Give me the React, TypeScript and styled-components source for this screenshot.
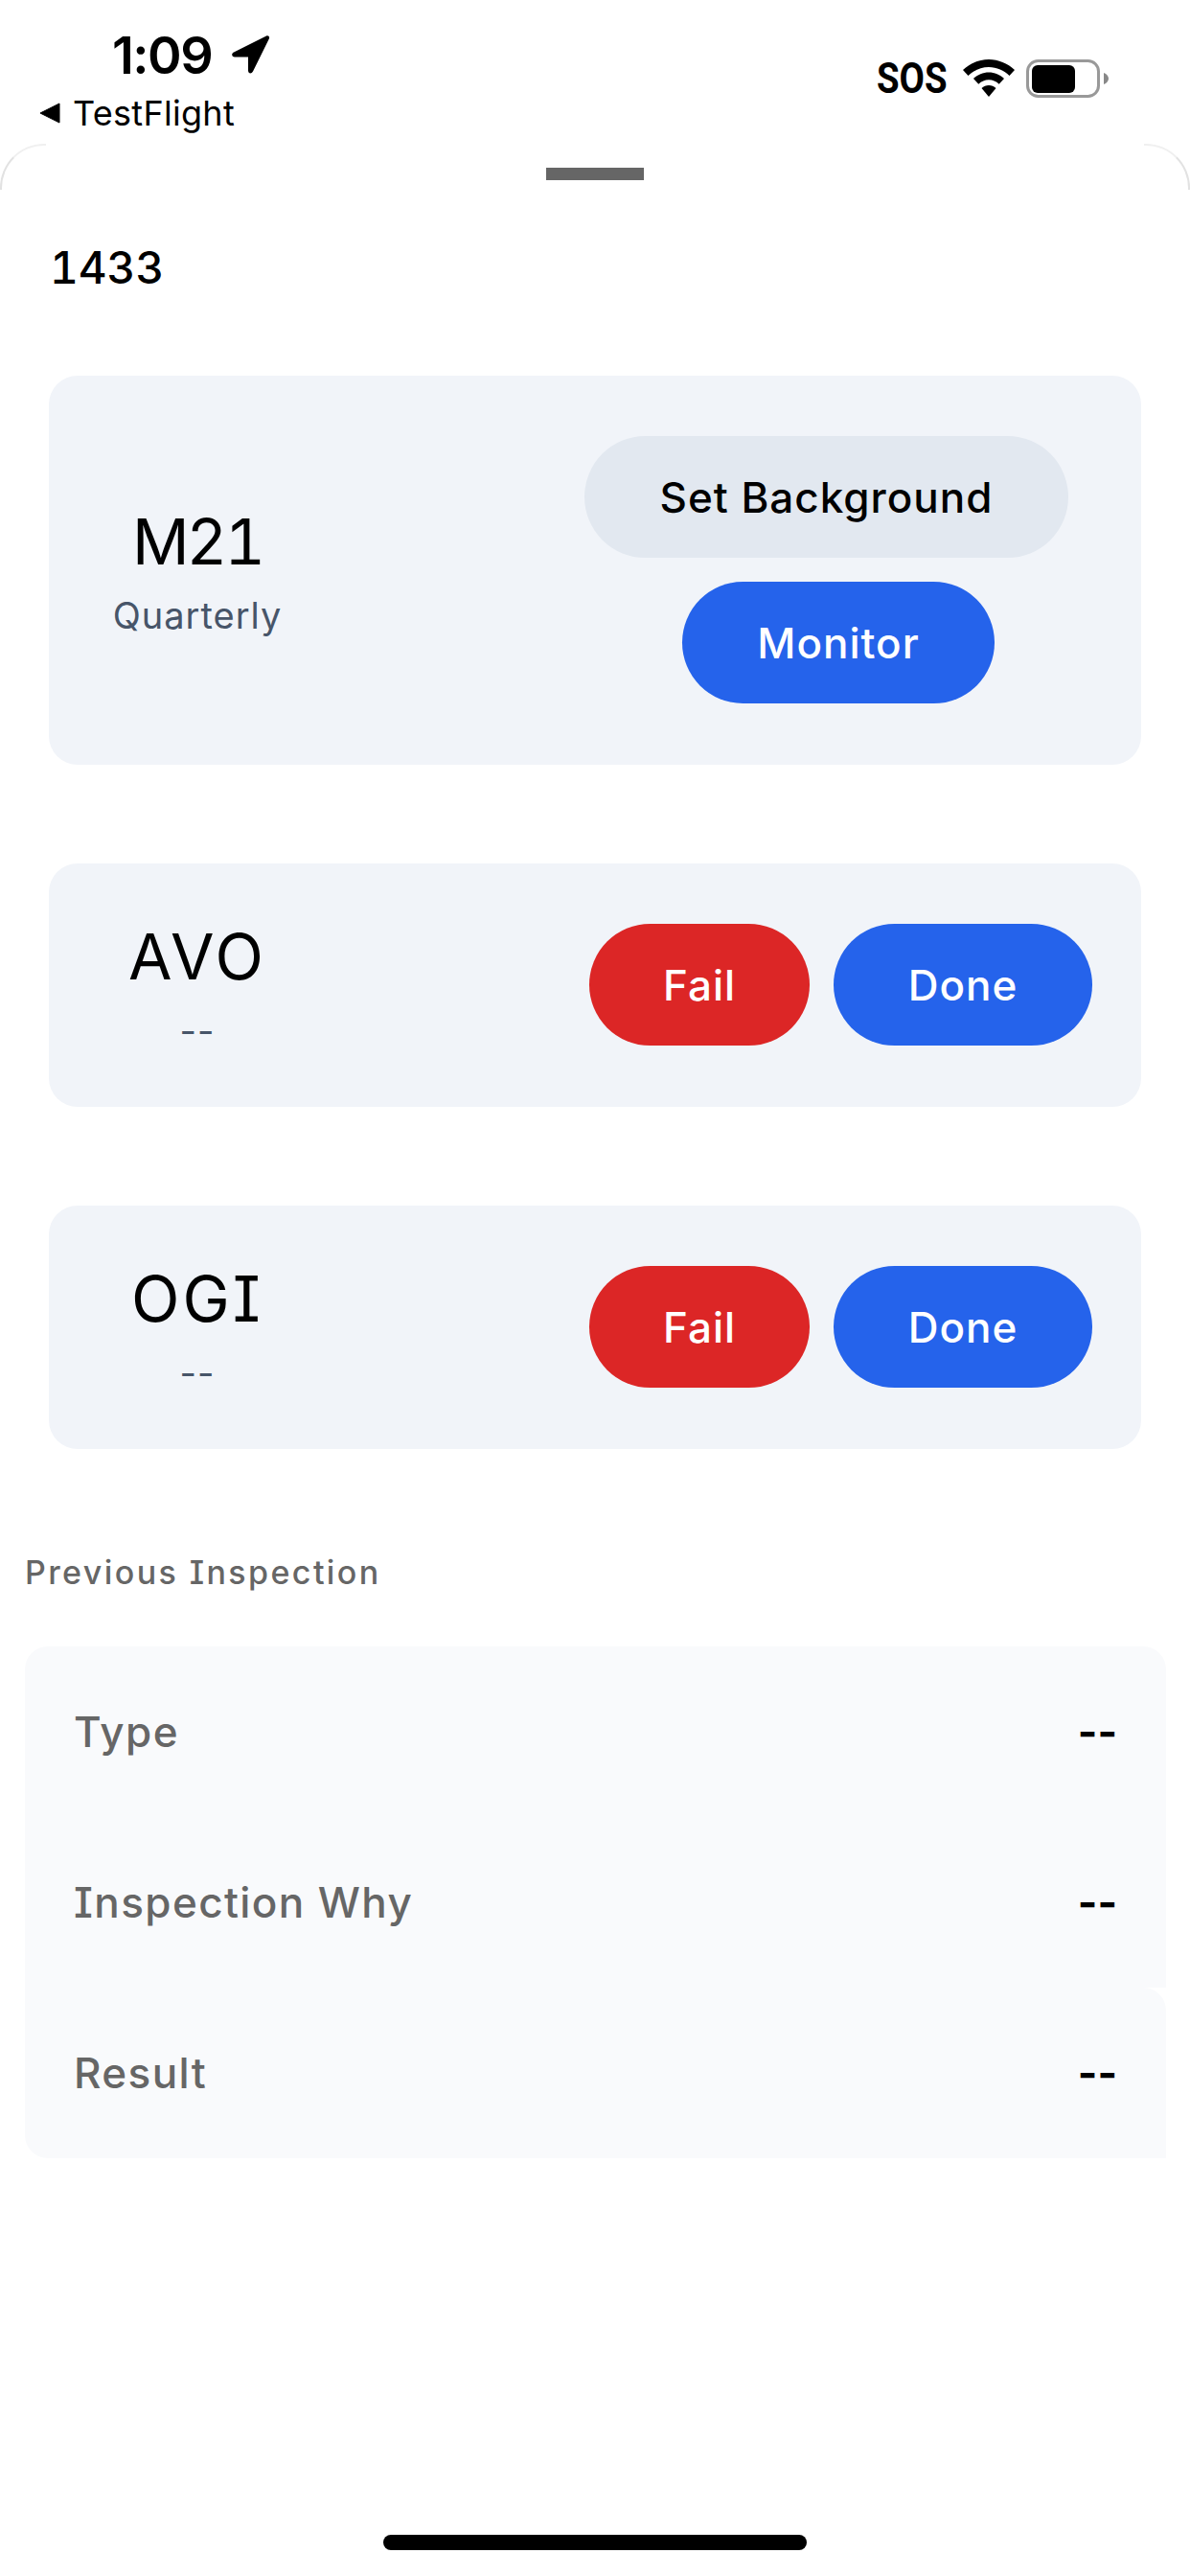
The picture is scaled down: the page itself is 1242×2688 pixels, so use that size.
import React from "react"
import styled, { createGlobalStyle } from "styled-components"

const GlobalStyle = createGlobalStyle`
  html, body {
    margin: 0;
    padding: 0;
    background: #fff;
  }
  body {
    font-family: "Inter", "Noto Sans", sans-serif;
    font-feature-settings: "cv08";
    color: #000;
  }
  * {
    box-sizing: border-box;
  }
`

const Page = styled.div`
  width: 1242px;
  height: 2688px;
  display: flex;
  flex-direction: column;
  overflow: hidden;
  background: #fff;
`

const StatusBar = styled.header`
  height: 150px;
  flex-shrink: 0;
  display: flex;
  justify-content: space-between;
`

const StatusLeft = styled.div`
  display: flex;
  flex-direction: column;
  padding: 29px 0 0 41px;
`

const TimeRow = styled.div`
  display: flex;
  align-items: center;
  gap: 20px;
  height: 56px;
  padding-left: 76px;
  font-size: 54px;
  font-weight: 600;
  font-feature-settings: normal;
  letter-spacing: -1.5px;
`

const BackRow = styled.div`
  display: flex;
  align-items: center;
  gap: 13px;
  height: 44px;
  margin-top: 11px;
  font-size: 36px;
  font-weight: 400;
  letter-spacing: 0.3px;
  font-feature-settings: normal;
`

const StatusRight = styled.div`
  display: flex;
  align-items: center;
  height: 40px;
  margin-top: 62px;
  margin-right: 84px;
`

const Sos = styled.span`
  width: 71px;
  margin-right: 19px;
  font-family: "Roboto", sans-serif;
  font-size: 44px;
  font-weight: 700;
  line-height: 40px;
  white-space: nowrap;
  transform: scaleX(0.87);
  transform-origin: left center;
`

const WifiSlot = styled.span`
  display: flex;
  margin-right: 12px;
`

const Sheet = styled.main`
  position: relative;
  flex: 1;
  display: flex;
  flex-direction: column;
  background: #fff;

  &::before,
  &::after {
    content: "";
    position: absolute;
    top: 0;
    width: 46px;
    height: 46px;
    border-top: 2px solid #f0f0f0;
  }
  &::before {
    left: 0;
    border-left: 2px solid #e2e2e2;
    border-top-left-radius: 46px;
  }
  &::after {
    right: 0;
    border-right: 2px solid #e2e2e2;
    border-top-right-radius: 46px;
  }
`

const Handle = styled.div`
  width: 102px;
  height: 13px;
  margin: 25px auto 0;
  background: #666;
`

const Title = styled.h1`
  margin: 61px 0 0 52px;
  height: 60px;
  font-size: 46px;
  line-height: 60px;
  font-weight: 500;
  font-feature-settings: "tnum";
`

const CardList = styled.section`
  display: flex;
  flex-direction: column;
  gap: 103px;
  margin: 83px 51px 0;
`

const Card = styled.article`
  display: flex;
  align-items: center;
  justify-content: space-between;
  padding-right: 51px;
  border-radius: 30px;
  background: #f1f4f9;
`

const NameBlock = styled.div`
  width: 310px;
  display: flex;
  flex-direction: column;
  align-items: center;
  gap: 35px;
  padding-top: 9px;
`

const Name = styled.div<{ $spacing: number }>`
  font-size: 66px;
  line-height: 50px;
  font-weight: 400;
  font-feature-settings: "tnum", "cv08";
  letter-spacing: ${(p) => p.$spacing}px;
`

const Frequency = styled.div`
  font-size: 38px;
  line-height: 34px;
  letter-spacing: 1px;
  color: #475569;
`

const ActionRow = styled.div`
  display: flex;
  gap: 25px;
  padding: 63px 0 64px;
`

const ActionColumn = styled.div`
  display: flex;
  flex-direction: column;
  align-items: flex-end;
  gap: 25px;
  padding: 63px 25px 64px 0;
`

const tones = {
  neutral: { bg: "#e2e8f0", fg: "#000" },
  primary: { bg: "#2563eb", fg: "#fff" },
  danger: { bg: "#dc2626", fg: "#fff" },
}

const ActionButton = styled.button<{ $tone: keyof typeof tones; $width: number; $inset?: number }>`
  width: ${(p) => p.$width}px;
  height: 127px;
  margin-right: ${(p) => p.$inset ?? 0}px;
  border: 0;
  padding: 0;
  border-radius: 64px;
  font-family: inherit;
  font-size: 44px;
  font-weight: 550;
  letter-spacing: 1px;
  background: ${(p) => tones[p.$tone].bg};
  color: ${(p) => tones[p.$tone].fg};
`

const SectionTitle = styled.h2`
  margin: 107px 0 0 26px;
  height: 44px;
  font-size: 34px;
  line-height: 44px;
  font-weight: 500;
  letter-spacing: 2.4px;
  color: #666;
`

const InfoPanel = styled.section`
  margin: 55px 25px 0 26px;
  display: flex;
  flex-direction: column;
`

const InfoRow = styled.div<{ $corners: string }>`
  height: 178px;
  display: flex;
  align-items: center;
  justify-content: space-between;
  padding: 0 51px;
  background: #f9fafc;
  border-radius: ${(p) => p.$corners};
`

const InfoLabel = styled.span`
  font-size: 44px;
  font-weight: 500;
  letter-spacing: 1.4px;
  color: #666;
`

const InfoValue = styled.span`
  font-size: 44px;
  font-weight: 700;
`

const HomeIndicator = styled.div`
  width: 442px;
  height: 16px;
  margin: auto auto 27px;
  border-radius: 8px;
  background: #000;
`

const LocationArrow = () => (
  <svg width="41" height="42" viewBox="0 0 41 42">
    <path
      d="M37 1.5 L3 18.5 C0 20 1 23.5 4 23.5 L18 23.5 L18 37.5 C18 41 21.5 41.5 23 38.5 L39.8 4.5 C40.8 2.3 39 0.6 37 1.5 Z"
      fill="#000"
    />
  </svg>
)

const BackArrow = () => (
  <svg width="22" height="22" viewBox="0 0 22 22">
    <path d="M21 1 L21 21 L1 11 Z" fill="#000" stroke="#000" strokeWidth="1" strokeLinejoin="round" />
  </svg>
)

const WifiIcon = () => (
  <svg width="54" height="40" viewBox="0 0 54 40">
    <path d="M27 0 C37 0 46.5 4 54 11 L48.5 17 C43 11.500 35.300 8 27 8 C18.700 8 11 11.500 5.500 17 L0 11 C7.500 4 17 0 27 0 Z" fill="#000" />
    <path d="M27 13.500 C33 13.500 38.700 16 43 20 L37.700 25.800 C34.800 23 31 21.300 27 21.300 C23 21.300 19.200 23 16.300 25.800 L11 20 C15.300 16 21 13.500 27 13.500 Z" fill="#000" />
    <path d="M27 27 C29.800 27 32.500 28 34.500 30 L27 39 L19.500 30 C21.500 28 24.200 27 27 27 Z" fill="#000" />
  </svg>
)

const BatteryIcon = () => (
  <svg width="87" height="40" viewBox="0 0 87 40">
    <rect x="1.500" y="1.500" width="74" height="37" rx="11" fill="none" stroke="#999" strokeWidth="3" />
    <rect x="6" y="6" width="45" height="29" rx="6" fill="#000" />
    <path d="M81 14 C84 15 86 17.500 86 20 C86 22.500 84 25 81 26 Z" fill="#888" />
  </svg>
)

const PlainCard = ({ name }: { name: string }) => (
  <Card>
    <NameBlock>
      <Name $spacing={3}>{name}</Name>
      <Frequency>--</Frequency>
    </NameBlock>
    <ActionRow>
      <ActionButton $tone="danger" $width={230}>Fail</ActionButton>
      <ActionButton $tone="primary" $width={270}>Done</ActionButton>
    </ActionRow>
  </Card>
)

const previous = [
  { label: "Type", corners: "24px 24px 0 0" },
  { label: "Inspection Why", corners: "0" },
  { label: "Result", corners: "0 24px 0 24px" },
]

const App: React.FC = () => {
  return (
    <Page>
      <GlobalStyle />
      <StatusBar>
        <StatusLeft>
          <TimeRow>
            1:09
            <LocationArrow />
          </TimeRow>
          <BackRow>
            <BackArrow />
            TestFlight
          </BackRow>
        </StatusLeft>
        <StatusRight>
          <Sos>SOS</Sos>
          <WifiSlot>
            <WifiIcon />
          </WifiSlot>
          <BatteryIcon />
        </StatusRight>
      </StatusBar>

      <Sheet>
        <Handle />
        <Title>1433</Title>

        <CardList>
          <Card>
            <NameBlock>
              <Name $spacing={-3}>M21</Name>
              <Frequency>Quarterly</Frequency>
            </NameBlock>
            <ActionColumn>
              <ActionButton $tone="neutral" $width={505}>Set Background</ActionButton>
              <ActionButton $tone="primary" $width={326} $inset={77}>Monitor</ActionButton>
            </ActionColumn>
          </Card>
          <PlainCard name="AVO" />
          <PlainCard name="OGI" />
        </CardList>

        <SectionTitle>Previous Inspection</SectionTitle>
        <InfoPanel>
          {previous.map((row) => (
            <InfoRow key={row.label} $corners={row.corners}>
              <InfoLabel>{row.label}</InfoLabel>
              <InfoValue>--</InfoValue>
            </InfoRow>
          ))}
        </InfoPanel>

        <HomeIndicator />
      </Sheet>
    </Page>
  )
}

export default App
